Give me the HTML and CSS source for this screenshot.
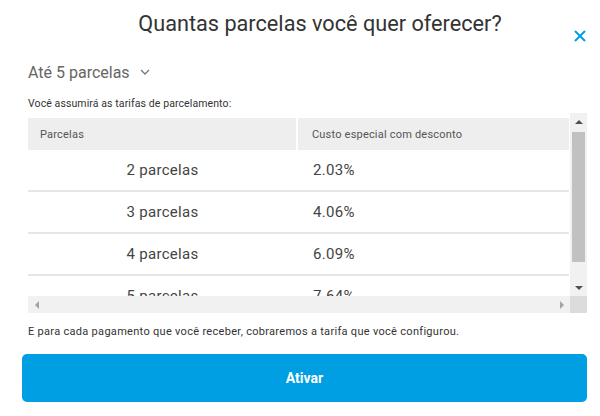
FILE: index.html
```html
<!DOCTYPE html>
<html lang="pt-BR">
<head>
    <meta charset="UTF-8">
    <meta name="viewport" content="width=device-width, initial-scale=1.0">
    <title>Parcelas</title>
    <link rel="stylesheet" href="styles.css">
</head>
<body>
    <div class="modal">
        <div class="modal-head">
            <h1>Quantas parcelas você quer oferecer?</h1>
            <button class="close" aria-label="Fechar">
                <svg width="12" height="12" viewBox="0 0 12 12"><path d="M1 1 L11 11 M11 1 L1 11" stroke="#009ee3" stroke-width="2" fill="none"/></svg>
            </button>
        </div>

        <div class="select">
            <span>Até 5 parcelas</span>
            <svg width="10" height="6" viewBox="0 0 10 6"><path d="M1 1 L5 5 L9 1" stroke="#777" stroke-width="1.3" fill="none"/></svg>
        </div>

        <p class="note">Você assumirá as tarifas de parcelamento:</p>

        <div class="table-box">
            <div class="viewport">
                <table>
                    <thead>
                        <tr><th class="col-a">Parcelas</th><th class="col-b">Custo especial com desconto</th></tr>
                    </thead>
                    <tbody>
                        <tr><td class="col-a">2 parcelas</td><td class="col-b">2.03%</td></tr>
                        <tr><td class="col-a">3 parcelas</td><td class="col-b">4.06%</td></tr>
                        <tr><td class="col-a">4 parcelas</td><td class="col-b">6.09%</td></tr>
                        <tr><td class="col-a">5 parcelas</td><td class="col-b">7.64%</td></tr>
                    </tbody>
                </table>
            </div>
            <div class="vbar">
                <span class="arrow up"></span>
                <div class="track"><div class="thumb"></div></div>
                <span class="arrow down"></span>
            </div>
            <div class="hbar">
                <span class="arrow left"></span>
                <span class="arrow right"></span>
            </div>
            <div class="corner"></div>
        </div>

        <p class="note footer">E para cada pagamento que você receber, cobraremos a tarifa que você configurou.</p>

        <button class="btn">Ativar</button>
    </div>
</body>
</html>
```

FILE: styles.css
```css
body {
    margin: 0;
    background: #fff;
    font-family: Roboto, "Liberation Sans", Arial, sans-serif;
    color: #333;
}

.modal {
    width: 600px;
    box-sizing: border-box;
    padding: 8px 13px 0 28px;
}

.modal-head {
    display: flex;
    align-items: flex-start;
}

h1 {
    flex: 1;
    margin: 0;
    padding: 2px 0 0 42px;
    font-size: 21.7px;
    font-weight: 400;
    line-height: 28px;
    text-align: center;
    color: #333;
}

.close {
    border: none;
    background: none;
    padding: 0;
    margin: 22px 1px 0 4px;
    width: 12px;
    height: 12px;
    cursor: pointer;
}

.close svg {
    display: block;
}

.select {
    display: flex;
    align-items: center;
    gap: 10px;
    margin-top: 20px;
    height: 20px;
    font-size: 16px;
    color: #666;
}

.note {
    margin: 0;
    font-size: 10.5px;
    line-height: 14px;
    letter-spacing: 0.1px;
    color: #333;
}

.select + .note {
    margin-top: 15px;
}

/* Tabelle mit Scrollbalken */
.table-box {
    display: grid;
    grid-template-columns: 1fr 17px;
    grid-template-rows: 183px 17px;
    margin-top: 2px;
}

.viewport {
    overflow: hidden;
}

table {
    width: 541px;
    margin-top: 5px;
    border-collapse: collapse;
}

th {
    height: 32px;
    padding: 0;
    background: #eee;
    font-size: 11px;
    font-weight: 400;
    letter-spacing: 0.2px;
    color: #555;
    text-align: left;
}

th.col-a {
    width: 256px;
    padding-left: 12px;
    border-right: 2px solid #fff;
}

th.col-b {
    padding-left: 14px;
}

td {
    height: 40px;
    padding: 0;
    border-bottom: 2px solid #e6e6e6;
    font-size: 15px;
    letter-spacing: 0.3px;
    color: #444;
}

td.col-a {
    text-align: center;
}

td.col-b {
    padding-left: 16px;
}

.vbar {
    display: flex;
    flex-direction: column;
    background: #f1f1f1;
}

.track {
    flex: 1;
    padding: 2px 2px 0;
}

.thumb {
    height: 130px;
    background: #c1c1c1;
}

.arrow {
    display: flex;
    justify-content: center;
    align-items: center;
    height: 17px;
    flex: none;
}

.arrow::before {
    content: "";
    border: 4px solid transparent;
}

.up::before {
    border-top: none;
    border-bottom-color: #505050;
}

.down::before {
    border-bottom: none;
    border-top-color: #505050;
}

.hbar {
    display: flex;
    justify-content: space-between;
    background: #f1f1f1;
}

.left, .right {
    width: 17px;
}

.left::before {
    border-left: none;
    border-right-color: #a3a3a3;
}

.right::before {
    border-right: none;
    border-left-color: #a3a3a3;
}

.corner {
    background: #dcdcdc;
}

.footer {
    margin-top: 12px;
    font-size: 11px;
    letter-spacing: 0.3px;
}

.btn {
    display: block;
    width: 565px;
    height: 48px;
    margin: 15px 0 0 -6px;
    border: none;
    border-radius: 5px;
    background: #009ee3;
    color: #fff;
    font-family: Roboto, "Liberation Sans", Arial, sans-serif;
    font-size: 14px;
    font-weight: 700;
    cursor: pointer;
}
```
